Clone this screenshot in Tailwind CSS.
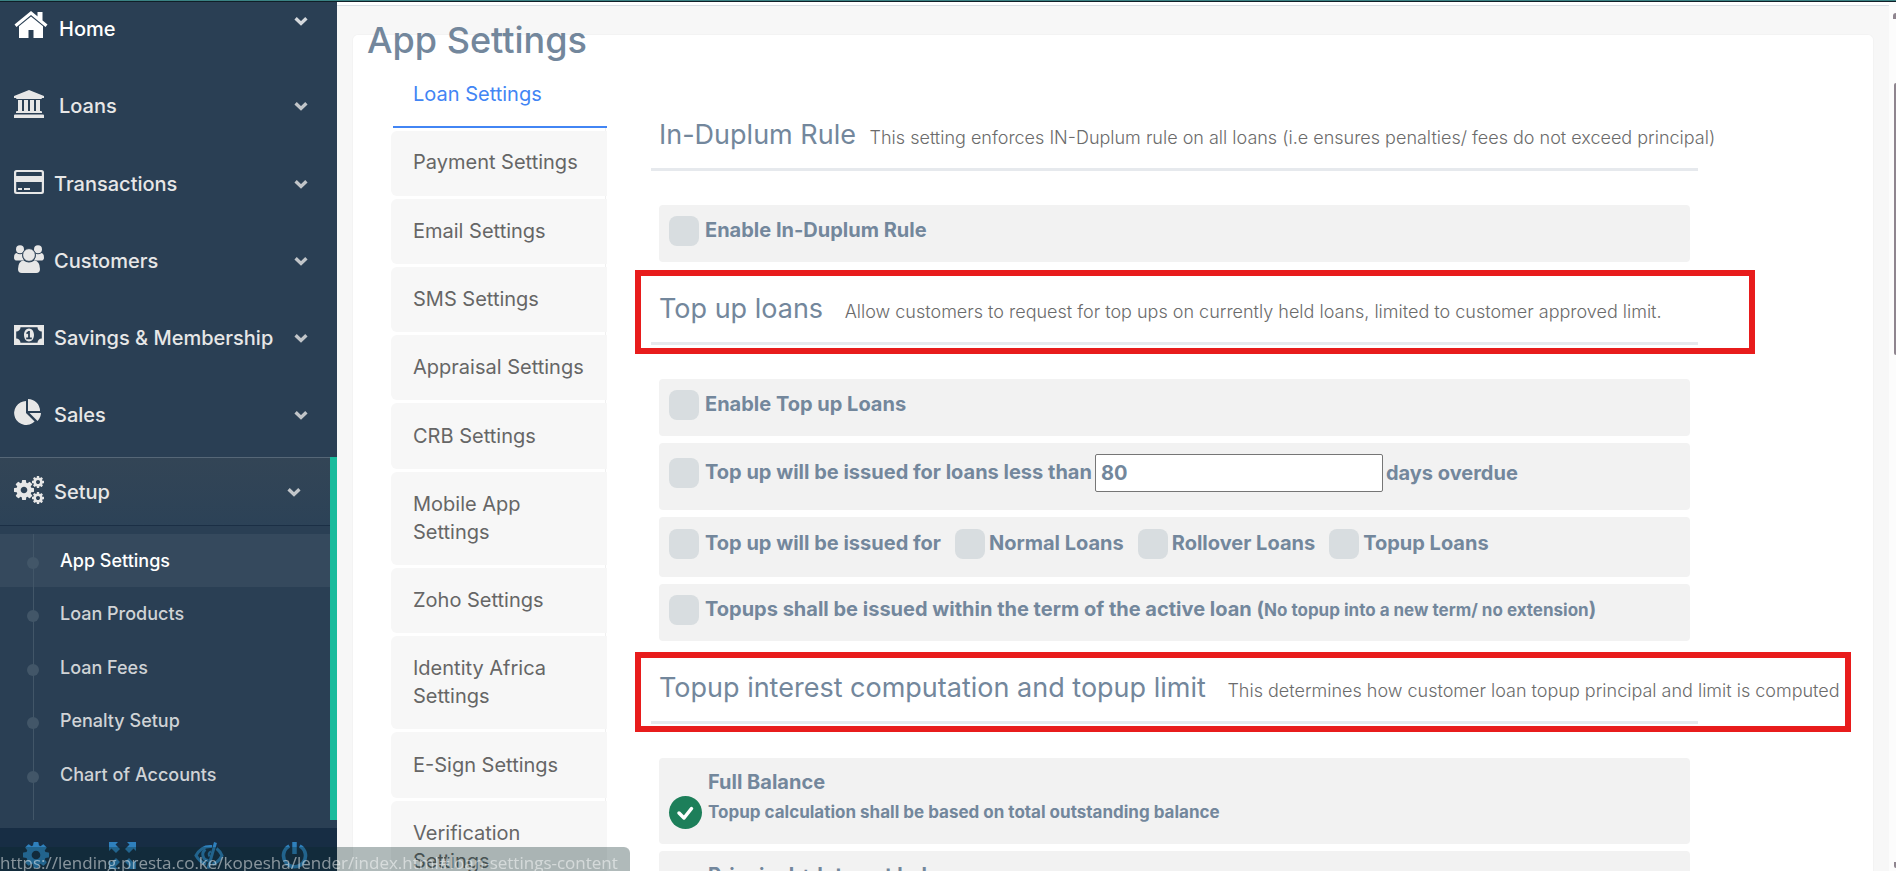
<!DOCTYPE html>
<html lang="en">
<head>
    <meta charset="UTF-8">
    <meta name="viewport" content="width=device-width, initial-scale=1.0">
    <title>App Settings</title>
    <script src="https://cdn.jsdelivr.net/npm/@tailwindcss/browser@4"></script>
</head>
<body class="h-screen overflow-hidden flex flex-col bg-[#f7f7f7] font-['Inter',sans-serif] text-[#73879c]">
    <!-- Shared icon shapes -->
    <svg class="hidden">
        <symbol id="chevron" viewBox="0 0 14 10">
            <path d="M1.6 2.2 7 7.4l5.4-5.2" fill="none" stroke="currentColor" stroke-width="3.4" />
        </symbol>
        <symbol id="cog" viewBox="128 128 1536 1536">
            <path fill="currentColor" d="M1152 896q0-106-75-181t-181-75-181 75-75 181 75 181 181 75 181-75 75-181zm512-109v222q0 12-8 23t-20 13l-185 28q-19 54-39 91 35 50 107 138 10 12 10 25t-9 23q-27 37-99 108t-94 71q-12 0-26-9l-138-108q-44 23-91 38-16 136-29 186-7 28-36 28h-222q-14 0-24.5-8.5t-11.5-21.5l-28-184q-49-16-90-37l-141 107q-10 9-25 9-14 0-25-11-126-114-165-168-7-10-7-23 0-12 8-23 15-21 51-66.5t54-70.5q-27-50-41-99l-183-27q-13-2-21-12.5t-8-23.5v-222q0-12 8-23t19-13l186-28q14-46 39-92-40-57-107-138-10-12-10-24 0-10 9-23 26-36 98.5-107.5t94.5-71.5q13 0 26 10l138 107q44-23 91-38 16-136 29-186 7-28 36-28h222q14 0 24.5 8.5t11.5 21.5l28 184q49 16 90 37l142-107q9-9 24-9 13 0 25 10 129 119 165 170 7 8 7 22 0 12-8 23-15 21-51 66.5t-54 70.5q26 50 41 98l183 28q13 2 21 12.5t8 23.5z" />
        </symbol>
    </svg>

    <div class="h-[2px] shrink-0 bg-[#3a8283] border-b border-[#101f28]"></div>

    <div class="flex flex-1 min-h-0">
        <!-- Sidebar -->
        <aside class="w-[337px] shrink-0 flex flex-col bg-[#2a3f54] text-[#e7e7e7] overflow-hidden">
            <nav class="flex-1 min-h-0 -mt-[7px] overflow-hidden">
                <ul class="text-xl font-medium">
                    <li class="h-[77px]">
                        <button type="button" class="flex items-center w-full h-[68px] pl-[14px] pr-[29px] text-left text-white">
                            <svg class="w-[34px] h-[27px] mr-[11px] mb-[9px]" viewBox="0 0 34 27" fill="currentColor">
                                <path d="M17 0 33.500 13.600 31.500 15.900 17 4 2.500 15.900.5 13.600 11.800 4.300zM23.500 1h5v8.500l-5-4.200z" />
                                <path d="M17 5.500 29 15.300V27H19.500v-8h-5v8H5V15.300z" />
                            </svg>
                            Home
                            <svg class="w-[14px] h-[10px] ml-auto mb-4 opacity-80"><use href="#chevron" /></svg>
                        </button>
                    </li>
                    <li class="h-[77px]">
                        <button type="button" class="flex items-center w-full h-[68px] pl-[14px] pr-[29px] text-left">
                            <svg class="w-[30px] h-[28px] mr-[15px] mb-1" viewBox="0 0 30 28" fill="currentColor">
                                <path d="M15 0 30 6v2h-2a1 1 0 0 1-1 1H3a1 1 0 0 1-1-1H0V6zM4 10h4v11H4zM10 10h4v11h-4zM16 10h4v11h-4zM22 10h4v11h-4zM3 21h24a1 1 0 0 1 1 1v1H2v-1a1 1 0 0 1 1-1zM1 24.500h28a1 1 0 0 1 1 1V28H0v-2.500a1 1 0 0 1 1-1z" />
                            </svg>
                            Loans
                            <svg class="w-[14px] h-[10px] ml-auto opacity-80"><use href="#chevron" /></svg>
                        </button>
                    </li>
                    <li class="h-[77px]">
                        <button type="button" class="flex items-center w-full h-[68px] pt-[2px] pl-[14px] pr-[29px] text-left">
                            <svg class="w-[30px] h-[24px] mr-[10px] mb-1" viewBox="0 0 30 24" fill="currentColor">
                                <path fill-rule="evenodd" d="M2.500 0h25A2.500 2.500 0 0 1 30 2.500v19a2.500 2.500 0 0 1-2.500 2.500h-25A2.500 2.500 0 0 1 0 21.500v-19A2.500 2.500 0 0 1 2.500 0zM3 2a.8.8 0 0 0-.8.8V6h25.600V2.800A.8.8 0 0 0 27 2zM2.200 12v9.200a.8.8 0 0 0 .8.8h24a.8.8 0 0 0 .8-.8V12z" />
                                <path d="M4 18h4v2H4zM10 18h6v2h-6z" />
                            </svg>
                            Transactions
                            <svg class="w-[14px] h-[10px] ml-auto opacity-80"><use href="#chevron" /></svg>
                        </button>
                    </li>
                    <li class="h-[77px]">
                        <button type="button" class="flex items-center w-full h-[68px] pt-[2px] pl-[14px] pr-[29px] text-left">
                            <svg class="w-[30px] h-[28px] mr-[10px] mb-1" viewBox="0 0 30 28" fill="currentColor">
                                <circle cx="6" cy="4.200" r="4" />
                                <circle cx="24" cy="4.200" r="4" />
                                <path d="M2.300 8q3.700 2.300 6.300.6Q7.800 12.500 10 15.500H3q-3 0-3-2.800Q0 8.500 2.300 8zM27.700 8q-3.700 2.300-6.300.6.800 3.900-1.400 6.900h7q3 0 3-2.800 0-4.200-2.300-4.700z" />
                                <circle cx="15" cy="10" r="6.400" stroke="#2a3f54" />
                                <path d="M9.500 15.500Q15 19.500 20.500 15.500 25.800 16 26 24q0 4-3.800 4H7.800Q4 28 4 24q.2-8 5.500-8.500z" />
                            </svg>
                            Customers
                            <svg class="w-[14px] h-[10px] ml-auto opacity-80"><use href="#chevron" /></svg>
                        </button>
                    </li>
                    <li class="h-[77px]">
                        <button type="button" class="flex items-center w-full h-[68px] pt-[2px] pl-[14px] pr-[29px] text-left">
                            <svg class="w-[30px] h-[20px] mr-[10px] mb-[6px]" viewBox="0 0 30 20" fill="currentColor">
                                <path fill-rule="evenodd" d="M0 0h30v20H0zM6.500 2.200a4.300 4.300 0 0 1-4.300 4.300v7a4.300 4.300 0 0 1 4.300 4.300h17a4.300 4.300 0 0 1 4.300-4.300v-7a4.300 4.300 0 0 1-4.300-4.300z" />
                                <path fill-rule="evenodd" d="M15 3.500c2.800 0 5 2.800 5 6.500s-2.200 6.500-5 6.500-5-2.800-5-6.500 2.200-6.500 5-6.500zM14.300 6 12 8l1 1.300 1.100-.9v4.200h-1.900v1.600h5.600v-1.600h-1.900V6z" />
                            </svg>
                            Savings &amp; Membership
                            <svg class="w-[14px] h-[10px] ml-auto opacity-80"><use href="#chevron" /></svg>
                        </button>
                    </li>
                    <li class="h-[77px]">
                        <button type="button" class="flex items-center w-full h-[68px] pt-[2px] pl-[14px] pr-[29px] text-left">
                            <svg class="w-[30px] h-[26px] mr-[10px] mb-[6px]" viewBox="0 0 30 26" fill="currentColor">
                                <path d="M12 2v12l8.600 8.500A12 12 0 1 1 12 2zM14 0a12 12 0 0 1 12 12H14zM15.500 14H27a12 12 0 0 1-3.500 8z" />
                            </svg>
                            Sales
                            <svg class="w-[14px] h-[10px] ml-auto opacity-80"><use href="#chevron" /></svg>
                        </button>
                    </li>
                    <li class="border-r-[7px] border-[#1abb9c]">
                        <button type="button" class="flex items-center w-full h-[69px] pl-[14px] pr-[29px] text-left border-t border-t-[#566777] border-b border-b-[#1b2f45] bg-linear-to-b from-[#334556] to-[#2c4257]">
                            <svg class="w-[30px] h-[28px] mr-[10px] mb-1" viewBox="0 0 30 28">
                                <use href="#cog" x="0" y="4" width="20" height="20" />
                                <use href="#cog" x="18" y="0" width="12" height="12" />
                                <use href="#cog" x="18" y="16" width="12" height="12" />
                            </svg>
                            Setup
                            <svg class="w-[14px] h-[10px] ml-auto opacity-80"><use href="#chevron" /></svg>
                        </button>
                        <ul class="relative pt-2 pb-[19px] text-lg text-[#d0d3d6] before:absolute before:left-[33px] before:top-2 before:bottom-0 before:w-px before:bg-[#425668]">
                            <li class="flex items-center h-[53px] pl-[27px] bg-[#35495d] text-white">
                                <span class="relative size-3 mt-1 mr-[21px] rounded-full bg-[#425668]"></span>
                                <a href="#app">App Settings</a>
                            </li>
                            <li class="flex items-center h-[54px] pl-[27px]">
                                <span class="relative size-3 mt-1 mr-[21px] rounded-full bg-[#425668]"></span>
                                <a href="#products">Loan Products</a>
                            </li>
                            <li class="flex items-center h-[53px] pl-[27px]">
                                <span class="relative size-3 mt-1 mr-[21px] rounded-full bg-[#425668]"></span>
                                <a href="#fees">Loan Fees</a>
                            </li>
                            <li class="flex items-center h-[54px] pl-[27px]">
                                <span class="relative size-3 mt-1 mr-[21px] rounded-full bg-[#425668]"></span>
                                <a href="#penalty">Penalty Setup</a>
                            </li>
                            <li class="flex items-center h-[53px] pl-[27px]">
                                <span class="relative size-3 mt-1 mr-[21px] rounded-full bg-[#425668]"></span>
                                <a href="#accounts">Chart of Accounts</a>
                            </li>
                        </ul>
                    </li>
                </ul>
            </nav>
            <div class="h-[43px] shrink-0 grid grid-cols-4 pt-[14px] bg-[#172d44] text-[#2f80bd]">
                <button type="button" aria-label="Settings" class="flex justify-center pr-3">
                    <svg class="size-[26px]"><use href="#cog" /></svg>
                </button>
                <button type="button" aria-label="Full screen" class="flex justify-center pr-2">
                    <svg class="size-[27px]" viewBox="0 0 27 27" fill="currentColor">
                        <path d="M0 0h9L6.500 2.500 11 7 7 11 2.500 6.500 0 9zM27 0v9l-2.500-2.500L20 11l-4-4 4.500-4.500L18 0zM0 27v-9l2.500 2.500L7 16l4 4-4.500 4.500L9 27zM27 27h-9l2.500-2.500L16 20l4-4 4.500 4.500L27 18z" />
                    </svg>
                </button>
                <button type="button" aria-label="Hide" class="flex justify-center pr-1">
                    <svg class="w-[30px] h-[27px]" viewBox="0 0 30 27" fill="none" stroke="currentColor" stroke-width="3">
                        <path d="M18 4.500Q7.500 3.500 2 13.500q3.500 6.500 10 8.500M22.500 6.500q3.500 2.500 5.500 7-3.500 7-9.500 8.700" />
                        <path d="M11.500 7.500a6 6 0 0 0 3 11" />
                        <path d="M17 9.500a3 3 0 0 0-1.500 5" stroke-width="2" />
                        <path d="M21.500.5 14 26.500" />
                    </svg>
                </button>
                <button type="button" aria-label="Log out" class="flex justify-center">
                    <svg class="size-[27px]" viewBox="0 0 27 27" fill="none" stroke="currentColor" stroke-width="3.600">
                        <path d="M8.300 4a11 11 0 1 0 10.400 0" />
                        <path d="M13.500 0v12" stroke-width="4.500" />
                    </svg>
                </button>
            </div>
        </aside>

        <!-- Content -->
        <main class="flex-1 min-w-0 flex flex-col overflow-hidden">
            <div class="h-1 shrink-0 bg-white border-b border-[#d9dee4]"></div>
            <div class="flex-1 mt-7 mx-[15px] rounded-t-md bg-white border border-b-0 border-[#f3f3f3]">
                <h1 class="-mt-[15px] mb-[3px] pl-[14px] text-4xl leading-10 font-medium">App Settings</h1>

                <div class="flex gap-[45px] pl-[38px] pr-[175px]">
                    <!-- Tabs -->
                    <ul class="w-[215px] shrink-0 flex flex-col gap-[3px] border-r border-[#f0f0f0] text-xl leading-7 text-[#666]">
                        <li class="ml-[2px] -mr-[2px]"><a href="#loan" class="block pt-[17px] pb-[18px] px-5 bg-white border-b-2 border-[#4285f4] text-[#4285f4]">Loan Settings</a></li>
                        <li class="-mr-[2px]"><a href="#payment" class="block pt-[17px] pb-5 px-[22px] rounded-l-md bg-[#f7f7f7]">Payment Settings</a></li>
                        <li class="-mr-[2px]"><a href="#email" class="block pt-[18px] pb-[19px] px-[22px] rounded-l-md bg-[#f7f7f7]">Email Settings</a></li>
                        <li class="-mr-[2px]"><a href="#sms" class="block pt-[18px] pb-[19px] px-[22px] rounded-l-md bg-[#f7f7f7]">SMS Settings</a></li>
                        <li class="-mr-[2px]"><a href="#appraisal" class="block pt-[18px] pb-[19px] px-[22px] rounded-l-md bg-[#f7f7f7]">Appraisal Settings</a></li>
                        <li class="-mr-[2px]"><a href="#crb" class="block pt-[19px] pb-[19px] px-[22px] rounded-l-md bg-[#f7f7f7]">CRB Settings</a></li>
                        <li class="-mr-[2px]"><a href="#mobile" class="block pt-[18px] pb-[19px] px-[22px] rounded-l-md bg-[#f7f7f7]">Mobile App Settings</a></li>
                        <li class="-mr-[2px]"><a href="#zoho" class="block pt-[18px] pb-[19px] px-[22px] rounded-l-md bg-[#f7f7f7]">Zoho Settings</a></li>
                        <li class="-mr-[2px]"><a href="#identity" class="block pt-[18px] pb-[19px] px-[22px] rounded-l-md bg-[#f7f7f7]">Identity Africa Settings</a></li>
                        <li class="-mr-[2px]"><a href="#esign" class="block pt-[19px] pb-[19px] px-[22px] rounded-l-md bg-[#f7f7f7]">E-Sign Settings</a></li>
                        <li class="-mr-[2px]"><a href="#verification" class="block pt-[18px] pb-[19px] px-[22px] rounded-l-md bg-[#f7f7f7]">Verification Settings</a></li>
                    </ul>

                    <!-- Loan settings panel -->
                    <form class="flex-1 min-w-0 mt-[25px] text-xl font-bold [&_label]:pb-[2px]">
                        <section>
                            <div class="h-[83px] pl-2 pt-[27px] mb-[34px] border-b-[3px] border-[#e6e9ed] whitespace-nowrap">
                                <h2 class="text-[27px] leading-10 font-normal">In-Duplum Rule <small class="ml-[6px] text-lg font-light text-[#6b6b6b]">This setting enforces IN-Duplum rule on all loans (i.e ensures penalties/ fees do not exceed principal)</small></h2>
                            </div>
                            <div class="flex items-center mx-2 pl-[10px] pt-[11px] pb-4 rounded bg-[#f2f2f2]">
                                <input id="duplum" type="checkbox" class="appearance-none size-[30px] mr-[6px] rounded-lg bg-[#d8dde0]">
                                <label for="duplum">Enable In-Duplum Rule</label>
                            </div>
                        </section>

                        <section>
                            <div class="relative h-[83px] pl-2 pt-[27px] mb-[34px] border-b-[3px] border-[#e6e9ed] whitespace-nowrap">
                                <h2 class="text-[27px] leading-10 font-normal">Top up loans <small class="ml-[14px] text-lg font-light text-[#6b6b6b]">Allow customers to request for top ups on currently held loans, limited to customer approved limit.</small></h2>
                                <div class="absolute top-2 -bottom-[12px] -left-4 -right-[57px] border-6 border-[#e81c1c] pointer-events-none"></div>
                            </div>
                            <div class="flex flex-col gap-[7px] mx-2">
                                <div class="flex items-center pl-[10px] pt-[11px] pb-4 rounded bg-[#f2f2f2]">
                                    <input id="topup" type="checkbox" class="appearance-none size-[30px] mr-[6px] rounded-lg bg-[#d8dde0]">
                                    <label for="topup">Enable Top up Loans</label>
                                </div>
                                <div class="flex items-center pl-[10px] pt-[11px] pb-[18px] rounded bg-[#f2f2f2]">
                                    <input id="overdue" type="checkbox" class="appearance-none size-[30px] mr-[6px] rounded-lg bg-[#d8dde0]">
                                    <label for="overdue">Top up will be issued for loans less than</label>
                                    <input type="text" value="80" aria-label="Days overdue" class="w-[288px] h-[38px] mx-[3px] px-[5px] bg-white border border-[#767676] rounded-xs">
                                    <span>days overdue</span>
                                </div>
                                <div class="flex items-center pl-[10px] pt-3 pb-[18px] rounded bg-[#f2f2f2]">
                                    <input id="types" type="checkbox" class="appearance-none size-[30px] mr-[6px] rounded-lg bg-[#d8dde0]">
                                    <label for="types" class="mr-[14px]">Top up will be issued for</label>
                                    <input id="normal" type="checkbox" class="appearance-none size-[30px] mr-1 rounded-lg bg-[#d8dde0]">
                                    <label for="normal" class="mr-[14px]">Normal Loans</label>
                                    <input id="rollover" type="checkbox" class="appearance-none size-[30px] mr-1 rounded-lg bg-[#d8dde0]">
                                    <label for="rollover" class="mr-[14px]">Rollover Loans</label>
                                    <input id="topups" type="checkbox" class="appearance-none size-[30px] mr-1 rounded-lg bg-[#d8dde0]">
                                    <label for="topups">Topup Loans</label>
                                </div>
                                <div class="flex items-center pl-[10px] pt-[11px] pb-4 rounded bg-[#f2f2f2]">
                                    <input id="term" type="checkbox" class="appearance-none size-[30px] mr-[6px] rounded-lg bg-[#d8dde0]">
                                    <label for="term">Topups shall be issued within the term of the active loan (<small class="text-[17px]">No topup into a new term/ no extension</small>)</label>
                                </div>
                            </div>
                        </section>

                        <section>
                            <div class="relative h-[83px] pl-2 pt-[27px] mb-[34px] border-b-[3px] border-[#e6e9ed] whitespace-nowrap">
                                <h2 class="text-[27px] leading-10 font-normal">Topup interest computation and topup limit <small class="ml-[14px] text-lg font-light text-[#6b6b6b]">This determines how customer loan topup principal and limit is computed</small></h2>
                                <div class="absolute top-[11px] -bottom-[11px] -left-4 -right-[153px] border-6 border-[#e81c1c] pointer-events-none"></div>
                            </div>
                            <div class="flex flex-col gap-[7px] mx-2">
                                <div class="flex items-end h-[86px] pl-[10px] pb-[15px] rounded bg-[#f2f2f2]">
                                    <div class="grid mr-[6px] text-white">
                                        <input id="full" name="basis" type="radio" checked class="col-start-1 row-start-1 appearance-none size-[33px] rounded-full bg-[#1d7f5a]">
                                        <svg class="col-start-1 row-start-1 size-[33px] pointer-events-none" viewBox="0 0 33 33" fill="none" stroke="currentColor" stroke-width="3.500" stroke-linecap="round" stroke-linejoin="round">
                                            <path d="M10 17l5 5 7.500-9.500" />
                                        </svg>
                                    </div>
                                    <label for="full" class="leading-[30px]">Full Balance<small class="block text-[17px] leading-[30px]">Topup calculation shall be based on total outstanding balance</small></label>
                                </div>
                                <div class="flex items-end h-[86px] pl-[10px] pb-[15px] rounded bg-[#f2f2f2]">
                                    <input id="principal" name="basis" type="radio" class="appearance-none size-[33px] mr-[6px] rounded-full bg-[#d8dde0]">
                                    <label for="principal" class="leading-[30px]">Principal + Interest bal<small class="block text-[17px] leading-[30px]">Topup calculation shall be based on principal and interest</small></label>
                                </div>
                            </div>
                        </section>
                    </form>
                </div>
            </div>
        </main>

        <!-- Scrollbar -->
        <div class="w-[7px] shrink-0 flex flex-col items-end bg-[#fcfcfc] pt-[11px] pb-[3px]">
            <div class="w-[3px] h-[6px] rounded-tl-full bg-[#8f858f]"></div>
            <div class="w-[2px] h-[272px] mt-16 rounded-l bg-[#8f858f]"></div>
            <div class="w-[2px] h-[6px] mt-auto rounded-bl-full bg-[#8f858f]"></div>
        </div>
    </div>

    <!-- Link address shown over the page -->
    <div class="fixed left-0 bottom-0 h-[24px] w-[630px] rounded-tr-md bg-[#082828]/32 font-['Open_Sans',sans-serif] text-[17px] leading-8 text-white/50 whitespace-nowrap">https://lending.presta.co.ke/kopesha/lender/index.html#loan-settings-content</div>
</body>
</html>
